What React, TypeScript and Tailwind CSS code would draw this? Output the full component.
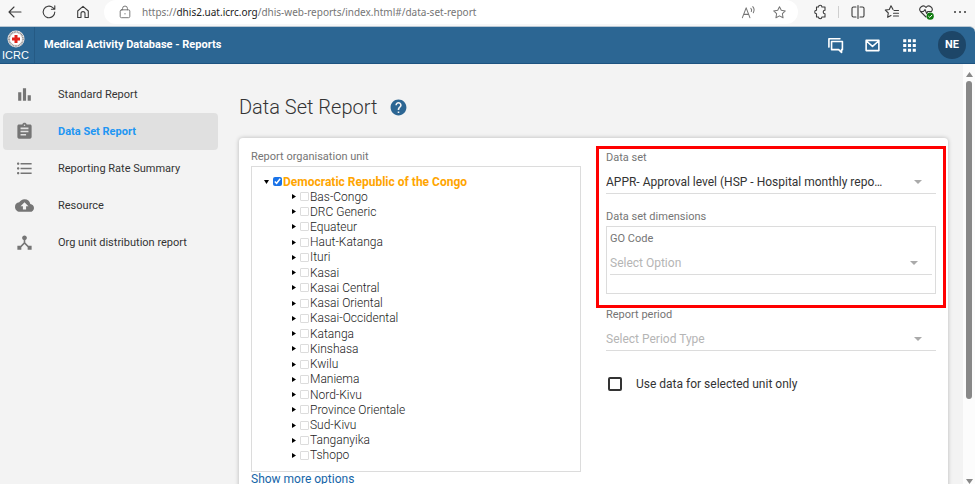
import React from 'react';
import {
  MdAssignment,
  MdBarChart,
  MdCloudUpload,
  MdDeviceHub,
  MdFormatListBulleted,
  MdHelp,
} from 'react-icons/md';

const units = [
  'Bas-Congo', 'DRC Generic', 'Equateur', 'Haut-Katanga', 'Ituri', 'Kasai',
  'Kasai Central', 'Kasai Oriental', 'Kasai-Occidental', 'Katanga', 'Kinshasa',
  'Kwilu', 'Maniema', 'Nord-Kivu', 'Province Orientale', 'Sud-Kivu',
  'Tanganyika', 'Tshopo',
];

const nav = [
  { label: 'Standard Report', Icon: MdBarChart },
  { label: 'Data Set Report', Icon: MdAssignment, active: true },
  { label: 'Reporting Rate Summary', Icon: MdFormatListBulleted },
  { label: 'Resource', Icon: MdCloudUpload },
  { label: 'Org unit distribution report', Icon: MdDeviceHub },
];

function Glyph({ children, size = 16, label }: { children: React.ReactNode; size?: number; label: string }) {
  return (
    <button type="button" aria-label={label} className="flex shrink-0 items-center justify-center">
      <svg width={size} height={size} viewBox="0 0 16 16" fill="none" stroke="currentColor" strokeWidth="1.1" strokeLinecap="round" strokeLinejoin="round">
        {children}
      </svg>
    </button>
  );
}

const star = 'M8 1.8l1.9 3.9 4.3.6-3.1 3 .7 4.3L8 11.6l-3.8 2 .7-4.3-3.1-3 4.3-.6z';

function BrowserBar() {
  return (
    <div className="flex h-[26px] shrink-0 items-start bg-[#f7f7f7] text-[#3c3c3c]">
      <div className="flex h-6 w-[104px] shrink-0 items-center gap-[18px] pl-[7px]">
        <Glyph label="Back"><path d="M14 8H2.2M7 3L2 8l5 5" /></Glyph>
        <Glyph label="Refresh"><path d="M13.8 8a5.8 5.8 0 1 1-2-4.4L13.6 5M13.8 1.8V5.2H10.4" /></Glyph>
        <Glyph label="Home"><path d="M2.700 7L8 2.300 13.300 7v6.500H10V9.600a2 2 0 0 0-4 0v3.900H2.700z" /></Glyph>
      </div>
      <div className="flex h-6 min-w-0 flex-1 items-center rounded-full bg-white pr-[11px] pl-[14px] text-[#757575]">
        <Glyph label="Site information" size={14}>
          <rect x="2.500" y="5.500" width="11" height="9" rx="1.500" />
          <path d="M5.200 5.500V4a2.800 2.800 0 0 1 5.600 0v1.500M8 9.700v.6" />
        </Glyph>
        <span className="ml-[10px] min-w-0 flex-1 font-['Noto_Sans',sans-serif] text-[10px] leading-4 whitespace-nowrap">
          https://<span className="text-[#222]">dhis2.uat.icrc.org</span>/dhis-web-reports/index.html#/data-set-report
        </span>
        <div className="flex gap-4">
          <Glyph label="Read aloud" size={15}><path d="M1.500 13.500L5.500 3l4 10.500M2.900 10h5.200M10.500 3.500q1.500 1.500.5 3.500M12.500 1.800q2.600 2.700.6 6.400" /></Glyph>
          <Glyph label="Add to favourites" size={15}><path d={star} /></Glyph>
        </div>
      </div>
      <div className="flex h-6 shrink-0 items-center gap-[18px] pr-[7px] pl-[14px]">
        <div className="flex items-center gap-[10px]">
          <Glyph label="Extensions"><path d="M5 3h1.500a1.700 1.700 0 0 1 3.400 0H13v3.200a1.800 1.800 0 0 0 0 3.600V13H9.900a1.700 1.700 0 0 1-3.400 0H4.500v-3.200a1.800 1.800 0 0 1 0-3.600V3z" /></Glyph>
          <span className="-mr-[17px] h-3 w-px bg-[#cfcfcf]" />
        </div>
        <span className="w-px" />
        <div className="-ml-[18px] flex items-center gap-[18px] pl-[9px]">
          <Glyph label="Split screen"><path d="M6 3H3.500A1.500 1.500 0 0 0 2 4.500v7A1.500 1.500 0 0 0 3.500 13H6M10 3h2.500A1.500 1.500 0 0 1 14 4.500v7a1.500 1.500 0 0 1-1.500 1.500H10M8 1.500v13" /></Glyph>
          <Glyph label="Favourites"><path d="M9 5.500L7 1.800 5.300 5.500l-4 .6 3 2.900-.7 4.300L7 11.500M10 6.500h4.500M9.500 9.300h5M9.500 12h5" /></Glyph>
          <Glyph label="Browser essentials">
            <path d="M8 13L2.500 7.500a3.300 3.300 0 0 1 5.500-4 3.300 3.300 0 0 1 5.500 4M2.500 7.500h3L7 5.500l1.700 4 1-2h3" />
            <circle cx="12.200" cy="12.200" r="3.600" fill="#0f7b0f" stroke="none" />
            <path d="M10.600 12.300l1.200 1.100 2-2.200" stroke="#fff" strokeWidth="1" />
          </Glyph>
          <Glyph label="More"><path d="M3 8h.01M8 8h.01M13 8h.01" strokeWidth="2" /></Glyph>
        </div>
      </div>
    </div>
  );
}

function AppHeader() {
  return (
    <header className="flex h-[38px] shrink-0 items-center rounded-tr-md border-t border-b border-t-[#b9c7d3] border-b-[#1d5380] bg-[#2c6693] text-white">
      <a href="#home" className="flex h-full w-[35px] shrink-0 flex-col items-center border-r border-[#255a84] pr-[3px]">
        <svg width="18" height="18" viewBox="0 0 18 18" className="mt-[3px] shrink-0">
          <circle cx="9" cy="9" r="8.500" fill="#f3eeee" />
          <circle cx="9" cy="9" r="7" fill="none" stroke="#8a8a8a" strokeWidth="1.600" strokeDasharray="1 .6" />
          <circle cx="9" cy="9" r="5.500" fill="#fff" />
          <path d="M7.500 5h3v2.500H13v3h-2.500V13h-3v-2.500H5v-3h2.500z" fill="#e2231a" />
        </svg>
        <span className="font-['Liberation_Sans',sans-serif] text-[11px] leading-[15px]">ICRC</span>
      </a>
      <a href="#reports" className="ml-[9px] text-[11px] font-bold">Medical Activity Database - Reports</a>
      <div className="ml-auto flex items-center gap-5 pr-[9px]">
        <Glyph label="Interpretations" size={17}><path d="M1.800 9.500V1.600h10.400M4.300 4.300h10.200v7.600h-.8v2.600L11 11.900H4.300z" strokeWidth="1.500" /></Glyph>
        <Glyph label="Messages" size={17}><path d="M2 3.200h12v9.600H2zM2.500 4L8 8.800 13.500 4" strokeWidth="1.500" /></Glyph>
        <Glyph label="Apps" size={17}><path d="M3.500 3.500h.01M8 3.500h.01M12.500 3.500h.01M3.500 8h.01M8 8h.01M12.500 8h.01M3.500 12.500h.01M8 12.500h.01M12.500 12.500h.01" strokeWidth="2.900" strokeLinecap="square" /></Glyph>
        <button type="button" className="size-7 rounded-full bg-[#1d4668] text-[11px] font-bold">NE</button>
      </div>
    </header>
  );
}

function Field({ id, label, value, muted }: { id: string; label: string; value: string; muted?: boolean }) {
  return (
    <div>
      <label htmlFor={id} className="block text-[11px] leading-[18px] text-[#757575]">{label}</label>
      <div className="relative mt-[2px] border-b border-[#dcdcdc]">
        <select id={id} className={`block h-6 w-full appearance-none truncate bg-transparent pt-px pr-11 text-[12px] outline-none ${muted ? 'text-[#b5b5b5]' : 'text-[#333]'}`}>
          <option>{value}</option>
        </select>
        <svg width="8" height="4" viewBox="0 0 8 4" className="pointer-events-none absolute top-[11px] right-[14px]"><path d="M0 0h8L4 4z" fill="#aaa" /></svg>
      </div>
    </div>
  );
}

export default function App() {
  return (
    <div className="flex h-screen flex-col overflow-hidden bg-[#f3f3f3] font-[Roboto,sans-serif]">
      <BrowserBar />
      <AppHeader />
      <div className="flex min-h-0 flex-1">
        <nav className="w-[221px] shrink-0 pt-3 pl-[3px]">
          {nav.map(({ label, Icon, active }) => (
            <a key={label} href="#report" className={`mr-[3px] flex h-[37px] items-center rounded pl-3 text-[11px] ${active ? 'bg-[#e0e0e0] font-bold text-[#2196f3]' : 'text-[#333]'}`}>
              <Icon size={19} className="text-[#757575]" />
              <span className="ml-6 pt-[2px]">{label}</span>
            </a>
          ))}
        </nav>
        <main className="flex min-w-0 flex-1 flex-col pr-[15px] pl-[18px]">
          <h1 className="flex h-[74px] shrink-0 items-center pt-3 text-[20px] font-light text-[#333]">
            Data Set Report
            <MdHelp size={19} className="ml-3 text-[#2c6693]" />
          </h1>
          <div className="grid shrink-0 grid-cols-2 gap-[25px] rounded-t bg-white p-3 pt-[11px] shadow-[0_0_4px_rgba(0,0,0,0.25)]">
            <section>
              <h2 className="text-[11px] leading-4 text-[#757575]">Report organisation unit</h2>
              <div className="mt-px border border-[#dcdcdc] pt-[7px] pb-2 pl-[11px]">
                <label className="flex h-[15px] items-center text-[12px] font-bold text-[#ffa500]">
                  <svg width="5" height="4" viewBox="0 0 5 4" className="mr-1 ml-px"><path d="M0 0h5L2.500 4z" fill="#000" /></svg>
                  <input type="checkbox" defaultChecked className="mr-px size-[9px] accent-[#1a73e8]" />
                  Democratic Republic of the Congo
                </label>
                <ul className="flex h-[274px] flex-col justify-between pl-[29px]">
                  {units.map((unit) => (
                    <li key={unit}>
                      <label className="flex h-[15px] items-center text-[12px] font-light text-[#222]">
                        <svg width="4" height="5" viewBox="0 0 4 5" className="mr-1"><path d="M0 0l4 2.500L0 5z" fill="#000" /></svg>
                        <input type="checkbox" className="mr-px size-[9px] appearance-none rounded-[1px] border border-[#dcdcdc]" />
                        {unit}
                      </label>
                    </li>
                  ))}
                </ul>
              </div>
              <button type="button" className="block text-[12px] leading-[14px] text-[#1565a8]">Show more options</button>
            </section>
            <section>
              <div className="relative">
                <div className="pointer-events-none absolute -inset-x-[10px] -top-[3px] -bottom-[14px] border-[3px] border-[#ff0000]" />
                <Field id="dataset" label="Data set" value="APPR- Approval level (HSP - Hospital monthly repo…" />
                <h2 className="mt-[14px] text-[11px] leading-[18px] text-[#757575]">Data set dimensions</h2>
                <div className="border border-[#dcdcdc] px-[3px] pt-[3px] pb-[18px]">
                  <Field id="gocode" label="GO Code" value="Select Option" muted />
                </div>
              </div>
              <div className="mt-3"><Field id="period" label="Report period" value="Select Period Type" muted /></div>
              <label className="mt-[25px] ml-[2px] flex items-center text-[12px] leading-4 text-[#333]">
                <input type="checkbox" className="mr-[14px] size-[14px] appearance-none rounded-[2px] border-2 border-[#333]" />
                Use data for selected unit only
              </label>
            </section>
          </div>
        </main>
        <div aria-hidden="true" className="flex w-3 shrink-0 flex-col items-center bg-[#fcfcfc] pt-2">
          <svg width="7" height="5" viewBox="0 0 7 5"><path d="M0 5h7L3.500 0z" fill="#888" /></svg>
          <div className="mt-1 h-[318px] w-[6px] rounded-full bg-[#888]" />
          <svg width="7" height="5" viewBox="0 0 7 5" className="mt-auto"><path d="M0 0h7L3.500 5z" fill="#888" /></svg>
        </div>
      </div>
    </div>
  );
}
